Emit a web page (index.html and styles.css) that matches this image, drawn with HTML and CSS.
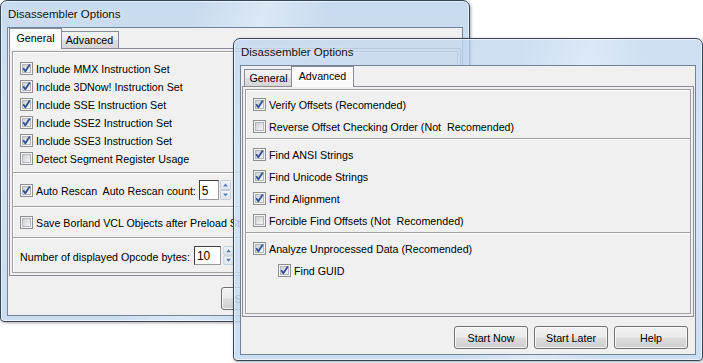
FILE: index.html
```html
<!DOCTYPE html>
<html>
<head>
<meta charset="utf-8">
<title>Disassembler Options</title>
<link rel="stylesheet" href="styles.css">
</head>
<body>
<svg class="defs" width="0" height="0" aria-hidden="true">
  <defs>
    <linearGradient id="cbg" x1="0" y1="0" x2="1" y2="1">
      <stop offset="0" stop-color="#c9ccd1"/>
      <stop offset="1" stop-color="#f8f8f8"/>
    </linearGradient>
    <linearGradient id="udg" x1="0" y1="0" x2="0" y2="1">
      <stop offset="0" stop-color="#f4f6f9"/>
      <stop offset="1" stop-color="#dde4ee"/>
    </linearGradient>
    <symbol id="cbo" viewBox="0 0 13 13">
      <rect x="0.5" y="0.5" width="12" height="12" fill="#f4f4f4" stroke="#8e8f8f"/>
      <rect x="2.5" y="2.5" width="8" height="8" fill="url(#cbg)" stroke="#b3b6bb"/>
    </symbol>
    <symbol id="cbx" viewBox="0 0 13 13">
      <rect x="0.5" y="0.5" width="12" height="12" fill="#f4f4f4" stroke="#8e8f8f"/>
      <rect x="2.5" y="2.5" width="8" height="8" fill="url(#cbg)" stroke="#b3b6bb"/>
      <path d="M3.2 6.3 L5.3 9.3 L9.8 2.6" fill="none" stroke="#2f4f93" stroke-width="1.8" stroke-linejoin="round"/>
    </symbol>
    <symbol id="ud" viewBox="0 0 11 20">
      <rect x="0.5" y="0.5" width="10" height="9" rx="1" fill="url(#udg)" stroke="#c2cad6"/>
      <rect x="0.5" y="10.5" width="10" height="9" rx="1" fill="url(#udg)" stroke="#c2cad6"/>
      <path d="M3 6.5 L5.5 3.5 L8 6.5 Z" fill="#5a7db5"/>
      <path d="M3 13.5 L8 13.5 L5.5 16.5 Z" fill="#5a7db5"/>
    </symbol>
  </defs>
</svg>

<div class="win win1">
  <div class="titlebar">Disassembler Options</div>
  <div class="client">
    <div class="tabs">
      <div class="tab gen active">General</div>
      <div class="tab adv">Advanced</div>
    </div>
    <div class="sheet sheet1">
      <div class="bevel">
        <div class="grp w1g1">
          <div class="row r18"><svg class="cb"><use href="#cbx"/></svg><span class="lbl">Include MMX Instruction Set</span></div>
          <div class="row r18"><svg class="cb"><use href="#cbx"/></svg><span class="lbl">Include 3DNow! Instruction Set</span></div>
          <div class="row r18"><svg class="cb"><use href="#cbx"/></svg><span class="lbl">Include SSE Instruction Set</span></div>
          <div class="row r18"><svg class="cb"><use href="#cbx"/></svg><span class="lbl">Include SSE2 Instruction Set</span></div>
          <div class="row r18"><svg class="cb"><use href="#cbx"/></svg><span class="lbl">Include SSE3 Instruction Set</span></div>
          <div class="row r18"><svg class="cb"><use href="#cbo"/></svg><span class="lbl">Detect Segment Register Usage</span></div>
        </div>
        <div class="grp sep w1g2">
          <div class="row r20"><svg class="cb"><use href="#cbx"/></svg><span class="lbl">Auto Rescan  Auto Rescan count:</span>
            <span class="edit e1">5</span><svg class="ud"><use href="#ud"/></svg>
          </div>
        </div>
        <div class="grp sep w1g3">
          <div class="row r18"><svg class="cb"><use href="#cbo"/></svg><span class="lbl">Save Borland VCL Objects after Preload Stage</span></div>
        </div>
        <div class="grp sep w1g4">
          <div class="row r19"><span class="lbl">Number of displayed Opcode bytes:</span>
            <span class="edit e2">10</span><svg class="ud ud2"><use href="#ud"/></svg>
          </div>
        </div>
      </div>
    </div>
    <div class="btnbar">
      <button class="btn">Start Now</button>
      <button class="btn">Start Later</button>
      <button class="btn">Help</button>
    </div>
  </div>
</div>

<div class="win win2">
  <div class="titlebar">Disassembler Options</div>
  <div class="client">
    <div class="tabs">
      <div class="tab gen">General</div>
      <div class="tab adv active">Advanced</div>
    </div>
    <div class="sheet sheet2">
      <div class="bevel">
        <div class="grp w2g1">
          <div class="row r22"><svg class="cb"><use href="#cbx"/></svg><span class="lbl">Verify Offsets (Recomended)</span></div>
          <div class="row r22"><svg class="cb"><use href="#cbo"/></svg><span class="lbl">Reverse Offset Checking Order (Not  Recomended)</span></div>
        </div>
        <div class="grp sep w2g2">
          <div class="row r22"><svg class="cb"><use href="#cbx"/></svg><span class="lbl">Find ANSI Strings</span></div>
          <div class="row r22"><svg class="cb"><use href="#cbx"/></svg><span class="lbl">Find Unicode Strings</span></div>
          <div class="row r22"><svg class="cb"><use href="#cbx"/></svg><span class="lbl">Find Alignment</span></div>
          <div class="row r22"><svg class="cb"><use href="#cbo"/></svg><span class="lbl">Forcible Find Offsets (Not  Recomended)</span></div>
        </div>
        <div class="grp sep w2g3">
          <div class="row r22"><svg class="cb"><use href="#cbx"/></svg><span class="lbl">Analyze Unprocessed Data (Recomended)</span></div>
          <div class="row r22 indent"><svg class="cb"><use href="#cbx"/></svg><span class="lbl">Find GUID</span></div>
        </div>
      </div>
    </div>
    <div class="btnbar">
      <button class="btn">Start Now</button>
      <button class="btn">Start Later</button>
      <button class="btn">Help</button>
    </div>
  </div>
</div>
</body>
</html>
```
FILE: styles.css
```css
* { box-sizing: border-box; }
html, body { margin: 0; padding: 0; background: #fff; }
body {
  position: relative;
  width: 703px;
  height: 363px;
  overflow: hidden;
  font-family: "Liberation Sans", Arial, sans-serif;
  font-size: 10.7px;
  color: #000;
}
.defs { position: absolute; width: 0; height: 0; overflow: hidden; }

/* window frames (windows on a desktop) */
.win {
  position: absolute;
  display: flex;
  flex-direction: column;
  width: 470px;
  border: 1px solid #34465a;
  border-radius: 7px 7px 4px 4px;
  padding: 0 6px 5px 6px;
  box-shadow: inset 0 0 0 1px rgba(255,255,255,0.6), 1px 1px 3px rgba(0,0,0,0.35);
}
.win1 {
  left: 0; top: 0; height: 322px;
  background:
    linear-gradient(105deg, rgba(255,255,255,0) 35%, rgba(255,255,255,0.35) 48%, rgba(255,255,255,0) 60%),
    linear-gradient(180deg, #c7daef 0, #d3e3f4 40%, #cadcf0 100%);
}
.win2 {
  left: 233px; top: 38px; height: 323px;
  background:
    linear-gradient(100deg, rgba(255,255,255,0) 55%, rgba(255,255,255,0.3) 68%, rgba(255,255,255,0) 80%),
    linear-gradient(180deg, rgba(192,214,240,0.8) 0, rgba(205,224,245,0.8) 40%, rgba(196,217,240,0.86) 100%);
}
.titlebar {
  height: 26px;
  line-height: 27px;
  padding-left: 1px;
  font-size: 11.5px;
  color: #111;
  text-shadow: 0 0 6px rgba(255,255,255,0.9);
  white-space: nowrap;
}
.client {
  flex: 1;
  display: flex;
  flex-direction: column;
  border: 1px solid #6f8399;
  background: #f0f0f0;
  padding: 0 1px;
}

/* tabs */
.tabs {
  display: flex;
  align-items: flex-end;
  height: 20px;
  padding-left: 2px;
}
.tab {
  height: 17px;
  line-height: 15px;
  padding-top: 1px;
  text-align: center;
  border: 1px solid #898c95;
  border-bottom: 0;
  background: linear-gradient(180deg, #f3f3f3 0, #ebebeb 50%, #dedede 51%, #d6d6d6 100%);
  white-space: nowrap;
}
.tab.gen { width: 49px; }
.tab.adv { width: 59px; }
.tab.active {
  position: relative;
  z-index: 2;
  height: 21px;
  margin: 0 -2px -1px -2px;
  padding-top: 2px;
  background: #fbfbfb;
}
.tab.gen.active { width: 53px; }
.tab.adv.active { width: 63px; }

.sheet {
  display: flex;
  flex-direction: column;
  border: 1px solid #898c95;
  padding: 2px;
  background: #f0f0f0;
}
.sheet1 { height: 228px; }
.sheet2 { height: 231px; }
.bevel {
  flex: 1;
  border: 1px solid #a0a0a0;
  box-shadow: inset 1px 1px 0 #fff;
  display: flex;
  flex-direction: column;
}
.grp { display: flex; flex-direction: column; padding-left: 7px; }
.grp.sep { border-top: 1px solid #a0a0a0; box-shadow: inset 0 1px 0 #fff; }
.w1g1 { padding-top: 7px; padding-bottom: 5px; }
.w1g2 { padding-top: 7px; padding-bottom: 6px; }
.w1g3 { padding-top: 6px; padding-bottom: 6px; }
.w1g4 { padding-top: 8px; }
.w2g1 { padding-top: 3px; padding-bottom: 1px; }
.w2g2 { padding-top: 4px; padding-bottom: 1px; }
.w2g3 { padding-top: 4px; }

.row { display: flex; align-items: center; white-space: nowrap; }
.r18 { height: 18px; }
.r19 { height: 19px; }
.r20 { height: 20px; }
.r22 { height: 22px; }
.indent { padding-left: 25px; }
.cb { width: 13px; height: 13px; flex: none; margin-right: 3px; }
.lbl { white-space: pre; padding-top: 2px; }

.edit {
  display: flex;
  align-items: center;
  background: #fff;
  border: 1px solid;
  border-color: #3f3f3f #9a9a9a #9a9a9a #3f3f3f;
  padding: 1px 0 0 2px;
  font-size: 12px;
}
.e1 { width: 20px; height: 20px; margin-left: 3px; }
.e2 { width: 27px; height: 19px; margin-left: 4px; }
.ud { width: 11px; height: 20px; margin-left: 1px; flex: none; }
.ud2 { margin-left: 2px; height: 19px; }

/* buttons */
.btnbar {
  margin-top: auto;
  display: flex;
  justify-content: flex-end;
  gap: 6px;
  padding: 0 6px 5px 0;
}
.btn {
  width: 74px;
  height: 23px;
  padding: 0;
  margin: 0;
  font-family: "Liberation Sans", Arial, sans-serif;
  font-size: 10.7px;
  color: #000;
  border: 1px solid #707070;
  border-radius: 3px;
  background: linear-gradient(180deg, #f2f2f2 0, #ebebeb 48%, #dddddd 52%, #cfcfcf 100%);
  box-shadow: inset 0 0 0 1px rgba(255,255,255,0.75);
}
```
